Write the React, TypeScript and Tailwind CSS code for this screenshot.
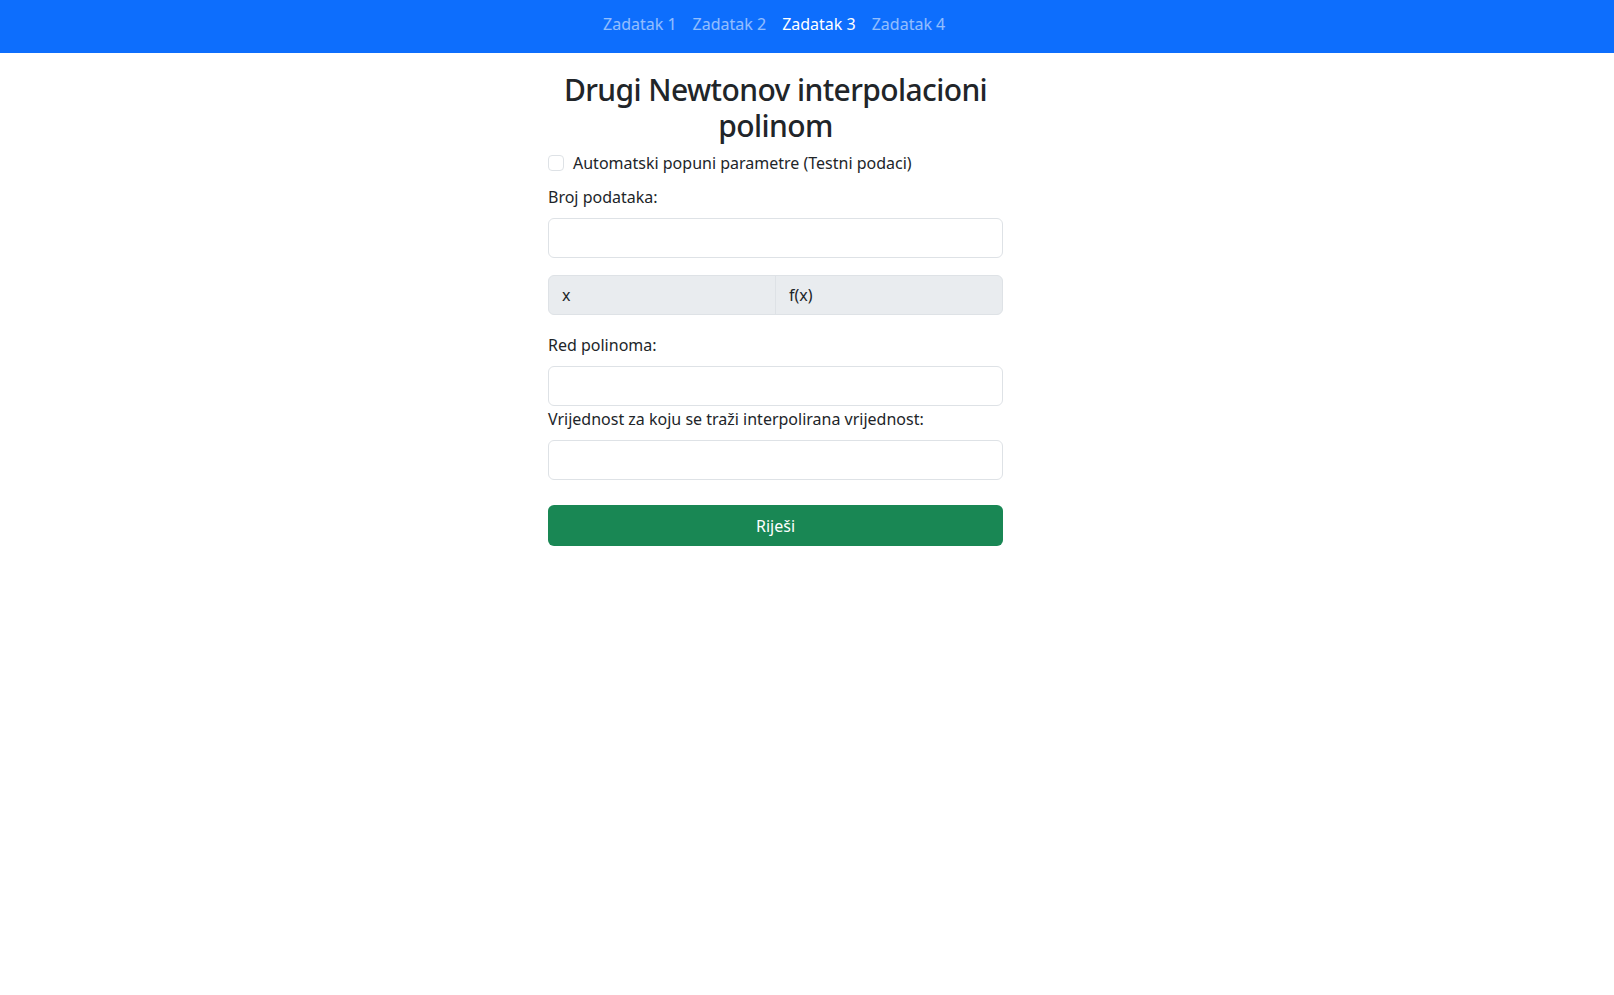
const font = "font-['Segoe_UI','Noto_Sans',sans-serif]";

function NavLink({ label, active }: { label: string; active?: boolean }) {
  return (
    <a href="#" className={`px-2 py-2 ${active ? 'text-white' : 'text-white/55'}`}>
      {label}
    </a>
  );
}

function Field({ label, mt }: { label: string; mt: string }) {
  return (
    <div className={mt}>
      <label className="block leading-6">{label}</label>
      <input
        type="text"
        className="mt-[9px] block h-[40px] w-full rounded-md border border-[#dee2e6] bg-white px-3"
      />
    </div>
  );
}

export default function App() {
  return (
    <div className={`min-h-screen bg-white text-base text-[#212529] ${font}`}>
      <nav className="flex h-[53px] items-center bg-[#0d6efd] pl-[595px] pb-[6px]">
        <NavLink label="Zadatak 1" />
        <NavLink label="Zadatak 2" />
        <NavLink label="Zadatak 3" active />
        <NavLink label="Zadatak 4" />
      </nav>

      <main className="ml-[548px] w-[455px] pt-[19px]">
        <h2 className="text-center text-[30px] font-medium leading-[36px] tracking-[-0.6px]">
          <span className="block">Drugi Newtonov interpolacioni</span>
          <span className="block">polinom</span>
        </h2>

        <label className="mt-[7px] flex items-center gap-2 leading-6">
          <input
            type="checkbox"
            className="m-0 h-4 w-4 appearance-none rounded border border-[#dee2e6] bg-white"
          />
          <span className="ml-[1px]">Automatski popuni parametre (Testni podaci)</span>
        </label>

        <Field label="Broj podataka:" mt="mt-[10px]" />

        <div className="mt-[17px] grid h-[40px] grid-cols-[227px_1fr] overflow-hidden rounded-md border border-[#dee2e6] bg-[#e9ecef]">
          <div className="flex items-center border-r border-[#dee2e6] px-[13px]">x</div>
          <div className="flex items-center px-[13px]">f(x)</div>
        </div>

        <Field label="Red polinoma:" mt="mt-[18px]" />
        <Field label="Vrijednost za koju se traži interpolirana vrijednost:" mt="mt-[1px]" />

        <button
          type="button"
          className="mt-[25px] h-[41px] w-full rounded-md bg-[#198754] text-white"
        >
          Riješi
        </button>
      </main>
    </div>
  );
}
